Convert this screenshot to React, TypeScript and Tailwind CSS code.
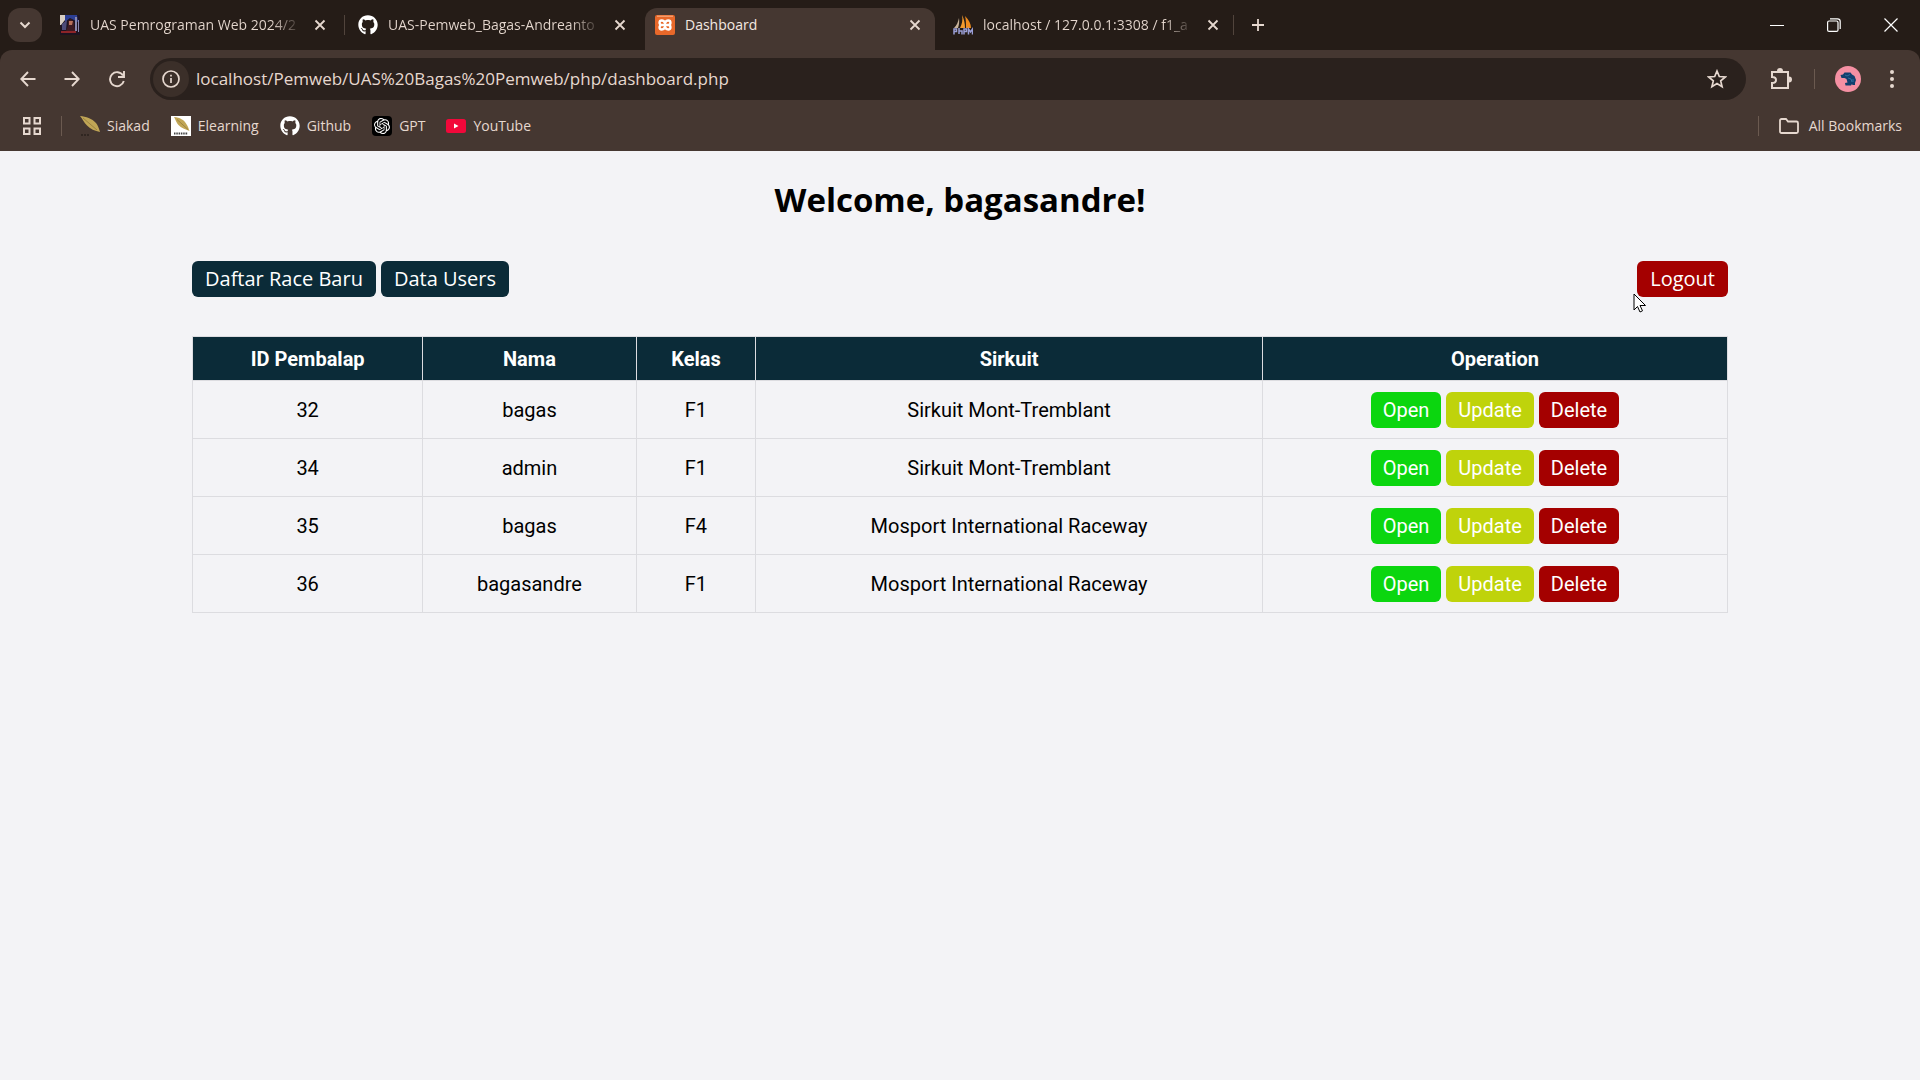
import React from "react";
import { FaGithub } from "react-icons/fa";
import { SiOpenai } from "react-icons/si";

const icon = "shrink-0 fill-none stroke-current";

function Close() {
  return (
    <button aria-label="Close tab" className="flex size-5 shrink-0 items-center justify-center text-[#e6d8cf]">
      <svg viewBox="0 0 12 12" className={`${icon} size-3`} strokeWidth="1.8"><path d="M1.5 1.5l9 9M10.5 1.5l-9 9" /></svg>
    </button>
  );
}

function CourseIcon() {
  return (
    <svg viewBox="0 0 20 20" className="size-5 shrink-0">
      <rect width="20" height="20" fill="#1d1320" />
      <path d="M0 0h6l-1 5-4 5H0z" fill="#d9cfc4" />
      <path d="M5 0h12l1 7-4-2-4-2-5 4z" fill="#2c3e94" />
      <path d="M2 9l5-4-1 10H2z" fill="#4c4a78" />
      <path d="M8 6l3-2 3 3v4l2 5H6l2-5z" fill="#3d1a22" />
      <path d="M9 6h4l-1 4H9z" fill="#b9705a" />
      <path d="M1 16h15v2H1z" fill="#8c2428" />
      <path d="M15 2h2v14h-2zM18 5h1v12h-1z" fill="#8a87ad" />
    </svg>
  );
}

function XamppIcon() {
  return (
    <svg viewBox="0 0 20 20" className="size-5 shrink-0">
      <rect width="20" height="20" rx="2" fill="#e8682a" />
      <path d="M2 1.200h16" stroke="#f6b48c" strokeWidth="1" />
      <path d="M9.800 10H6.800C3.800 10 3.800 5.500 6.800 5.500S9.500 8 10 8s.2-2.500 3.200-2.500S16.200 10 13.200 10h-3zM9.800 10H6.800c-3 0-3 4.500 0 4.500S9.500 12 10 12s.2 2.500 3.200 2.500 3-4.500 0-4.500" fill="none" stroke="#fff" strokeWidth="2.400" strokeLinejoin="round" />
    </svg>
  );
}

function SailIcon() {
  return (
    <svg viewBox="0 0 20 20" className="size-5 shrink-0">
      <path d="M6 3c.5 4 0 7-1 10H1C4 10 5 7 6 3z" fill="#c9b49b" />
      <path d="M9 0c1 5 0 9-2 13h5c0-5-1-9-3-13z" fill="#f29a2e" />
      <path d="M12 1c4 4 6 8 6 12h-5c0-5 0-8-1-12z" fill="#f08c1e" />
      <path d="M1 19.500V14h2.500v2.500H1M6 13v6M6 16h3v3.500M11 19.500V14h2.500v2.500H11M15.500 19.500V14l2 3 2-3v5.500" fill="none" stroke="#9a9ed6" strokeWidth="1.500" />
    </svg>
  );
}

function Feather() {
  return (
    <svg viewBox="0 0 20 20" className="size-5 shrink-0">
      <path d="M0 0c6 .5 12 2.500 16 7 2 2.500 3 5.500 4 9-5-1-10-3-13-6.500C4 6.500 2.500 3 0 0z" fill="#c1a656" />
      <path d="M3 2l14 12" stroke="#8d7535" strokeWidth=".7" />
      <path d="M1 19h9" stroke="#2a221c" strokeWidth="1.500" strokeDasharray="2 1" />
    </svg>
  );
}

function FeatherCard() {
  return (
    <svg viewBox="0 0 20 20" className="size-5 shrink-0">
      <path d="M0 0h20v20H0z" fill="#fff" />
      <path d="M3 1c6 .5 10 3 12 6.500 2 2.500 2.500 5 3.500 7.500-4-1.500-8.500-3-11-6S5 4.500 3 1z" fill="#c1a656" />
      <path d="M6 3.500l11 10" stroke="#8d7535" strokeWidth=".7" />
      <path d="M3 17.500h14" stroke="#444" strokeWidth="2.200" strokeDasharray="1.500 .8" />
    </svg>
  );
}

function YouTubeIcon() {
  return (
    <svg viewBox="0 0 20 14" className="h-[14px] w-5 shrink-0">
      <rect width="20" height="14" rx="2.500" fill="#f2083a" />
      <path d="M8 4.500l4.500 2.500L8 9.500z" fill="#fff" />
    </svg>
  );
}

function Avatar() {
  return (
    <svg viewBox="0 0 26 26" className="size-[26px]">
      <circle cx="13" cy="13" r="13" fill="#f590a3" />
      <path d="M5.500 9L8 8.500 9.500 6.500h6L17 8.500l2.500 1.500 1.500 4-1 3v2h-2.500l-.5-1-1 1.500h-5.500l-.5-2.500 2.500-.5-1-3.500-2-1H6.500z" fill="#12406e" />
      <path d="M10 9l2 1 3-1.500M13 12l3 1 1 3M18 13v3" fill="none" stroke="#2f6c9d" />
    </svg>
  );
}

function Tab({ label, icon: tabIcon, width }: { label: string; icon: React.ReactNode; width: string }) {
  return (
    <div className={`${width} flex shrink-0 items-center pr-[6px]`}>
      {tabIcon}
      <span className="ml-[10px] flex-1 whitespace-nowrap">
        <span className="bg-linear-to-r from-[#e6d8cf] from-88% to-[#e6d8cf]/20 bg-clip-text text-transparent">{label}</span>
      </span>
      <Close />
    </div>
  );
}

const links = [
  { label: "Siakad", icon: <Feather /> },
  { label: "Elearning", icon: <FeatherCard /> },
  { label: "Github", icon: <FaGithub className="size-5 text-white" /> },
  { label: "GPT", icon: <span className="flex size-5 items-center justify-center rounded bg-black"><SiOpenai className="size-4 text-white" /></span> },
  { label: "YouTube", icon: <YouTubeIcon /> },
];

const rows = [
  ["32", "bagas", "F1", "Sirkuit Mont-Tremblant"],
  ["34", "admin", "F1", "Sirkuit Mont-Tremblant"],
  ["35", "bagas", "F4", "Mosport International Raceway"],
  ["36", "bagasandre", "F1", "Mosport International Raceway"],
];

const btn = "h-9 rounded-md text-xl leading-9 text-white";
const cell = "border border-[#dcdce0]";

export default function App() {
  return (
    <div className="min-h-screen bg-[#f3f3f6] font-['Roboto',sans-serif] text-black">
      <header className="bg-[#251c17] font-['Open_Sans',sans-serif] text-sm text-[#e6d8cf]">
        <div className="flex h-[50px] items-stretch">
          <button aria-label="Search tabs" className="my-2 ml-2 mr-[18px] flex w-[34px] shrink-0 items-center justify-center rounded-xl bg-[#453731]">
            <svg viewBox="0 0 12 12" className={`${icon} size-3`} strokeWidth="2"><path d="M1.500 3.500L6 8l4.500-4.500" /></svg>
          </button>
          <Tab width="w-[276px]" label="UAS Pemrograman Web 2024/2" icon={<CourseIcon />} />
          <span className="my-auto ml-2 mr-[13px] h-5 w-px bg-[#51443c]" />
          <Tab width="w-[278px]" label="UAS-Pemweb_Bagas-Andreanto" icon={<FaGithub className="size-5 shrink-0 text-white" />} />
          <div className="mt-2 ml-[9px] flex w-[290px] shrink-0 items-center rounded-t-xl bg-[#453731] px-[10px] pb-2">
            <XamppIcon />
            <span className="ml-[10px] flex-1 text-[#f4e9e2]">Dashboard</span>
            <Close />
          </div>
          <Tab width="ml-[18px] w-[276px]" label="localhost / 127.0.0.1:3308 / f1_a" icon={<SailIcon />} />
          <span className="my-auto ml-1 mr-[17px] h-5 w-px bg-[#51443c]" />
          <button aria-label="New tab">
            <svg viewBox="0 0 14 14" className={`${icon} size-[14px]`} strokeWidth="1.800"><path d="M7 1v12M1 7h12" /></svg>
          </button>
          <div className="ml-auto flex items-center gap-[43px] pr-[22px] text-white">
            <button aria-label="Minimize"><svg viewBox="0 0 14 14" className={`${icon} size-[14px]`}><path d="M0 7.500h14" /></svg></button>
            <button aria-label="Restore"><svg viewBox="0 0 14 14" className={`${icon} size-[14px]`} strokeWidth="1.200"><rect x=".6" y="3" width="10.400" height="10.400" rx="1.500" /><path d="M3 .8h7.500a2.700 2.700 0 012.700 2.700V11" /></svg></button>
            <button aria-label="Close window"><svg viewBox="0 0 14 14" className={`${icon} size-[14px]`} strokeWidth="1.200"><path d="M.5.5l13 13M13.500.5l-13 13" /></svg></button>
          </div>
        </div>
        <div className="rounded-t-xl bg-[#453731]">
          <div className="flex items-center pt-2">
            <button aria-label="Back" className="ml-5 shrink-0"><svg viewBox="0 0 16 16" className={`${icon} size-4`} strokeWidth="1.900"><path d="M15.500 8H1.500M8 1L1.300 8 8 15" /></svg></button>
            <button aria-label="Forward" className="ml-[28px] shrink-0"><svg viewBox="0 0 16 16" className={`${icon} size-4`} strokeWidth="1.900"><path d="M.5 8h14M8 1l6.700 7L8 15" /></svg></button>
            <button aria-label="Reload" className="ml-[28px] shrink-0"><svg viewBox="0 0 18 18" className={`${icon} size-[18px]`} strokeWidth="1.900"><path d="M15 5.500A7 7 0 1015.800 11M16 1v6h-6" /></svg></button>
            <div className="ml-6 flex h-[42px] flex-1 items-center rounded-full bg-[#2a211d] px-[3px]">
              <button aria-label="Site information" className="flex size-9 items-center justify-center rounded-full bg-[#3b2f29]">
                <svg viewBox="0 0 18 18" className={`${icon} size-[18px]`} strokeWidth="1.700"><circle cx="9" cy="9" r="8" /><path d="M9 8v5M9 4.800v1.800" /></svg>
              </button>
              <input aria-label="Address" className="ml-[7px] min-w-0 flex-1 bg-transparent text-[17px] outline-none" defaultValue="localhost/Pemweb/UAS%20Bagas%20Pemweb/php/dashboard.php" />
              <button aria-label="Bookmark this page" className="mr-4"><svg viewBox="0 0 20 20" className={`${icon} size-5`} strokeWidth="1.700"><path d="M10 2l2.300 5.500 6 .5-4.600 3.900 1.400 5.800L10 14.600l-5.100 3.100 1.400-5.800L1.700 8l6-.5z" /></svg></button>
            </div>
            <button aria-label="Extensions" className="ml-6 shrink-0"><svg viewBox="0 0 22 22" className={`${icon} size-[22px]`} strokeWidth="2"><path d="M2 4h16v16H2v-5c3 0 4-1.500 4-3s-1-3-4-3z" /><path d="M8 3a2 2 0 014 0M19 9.500a2 2 0 010 4" className="fill-current" /></svg></button>
            <span className="ml-[22px] h-5 w-px bg-[#6b5a50]" />
            <button aria-label="Profile" className="ml-5 shrink-0"><Avatar /></button>
            <button aria-label="Menu" className="mr-[25px] ml-7 shrink-0"><svg viewBox="0 0 6 18" className="h-[18px] w-[6px] fill-current"><circle cx="3" cy="2" r="2" /><circle cx="3" cy="9" r="2" /><circle cx="3" cy="16" r="2" /></svg></button>
          </div>
          <nav className="flex h-[51px] items-center">
            <button aria-label="Apps" className="ml-[23px]"><svg viewBox="0 0 18 18" className={`${icon} size-[18px]`} strokeWidth="2"><path d="M1 1h5.500v5.500H1zM11.500 1H17v5.500h-5.500zM1 11.500h5.500V17H1zM11.500 11.500H17V17h-5.500z" /></svg></button>
            <span className="ml-5 mr-[18px] h-5 w-px bg-[#6b5a50]" />
            <div className="flex items-center gap-[21px]">
              {links.map((l) => (
                <a key={l.label} href="#" className="flex items-center gap-[7px]">{l.icon}{l.label}</a>
              ))}
            </div>
            <span className="ml-auto h-5 w-px bg-[#6b5a50]" />
            <button className="mr-[18px] ml-5 flex items-center gap-[10px]">
              <svg viewBox="0 0 20 16" className={`${icon} h-4 w-5`} strokeWidth="1.800"><path d="M1 13.500v-11A1.500 1.500 0 012.500 1H7l2 2.500h8.500A1.500 1.500 0 0119 5v8.500a1.500 1.500 0 01-1.500 1.500h-15A1.500 1.500 0 011 13.500z" /></svg>
              All Bookmarks
            </button>
          </nav>
        </div>
      </header>
      <main className="mx-auto w-4/5 pt-7">
        <h1 className="text-center font-['Open_Sans',sans-serif] text-[33px] leading-[42px] font-bold">Welcome, bagasandre!</h1>
        <div className="mt-10 flex gap-[5px] font-['Open_Sans',sans-serif]">
          <button className={`${btn} bg-[#0b2b38] px-[13px]`}>Daftar Race Baru</button>
          <button className={`${btn} bg-[#0b2b38] px-[13px]`}>Data Users</button>
          <div className="relative ml-auto">
            <button className={`${btn} bg-[#a40000] px-[13px]`}>Logout</button>
            <svg viewBox="0 0 14 20" className="pointer-events-none absolute top-8 -left-1 h-5 w-[14px]"><path d="M1 1v16l3.500-3.500L7 19l2.500-1.200L7 12.500h5.500z" fill="#fff" stroke="#000" strokeWidth="1" /></svg>
          </div>
        </div>
        <table className="mt-[39px] w-full table-fixed border-collapse text-center text-xl">
          <colgroup><col className="w-[15%]" /><col className="w-[13.9%]" /><col className="w-[7.8%]" /><col className="w-[33%]" /><col className="w-[30.3%]" /></colgroup>
          <thead>
            <tr className="h-11 bg-[#0b2b38] text-white">
              {["ID Pembalap", "Nama", "Kelas", "Sirkuit", "Operation"].map((h) => <th key={h} className={`${cell} font-bold`}>{h}</th>)}
            </tr>
          </thead>
          <tbody>
            {rows.map((r) => (
              <tr key={r[0]} className="h-[58px]">
                {r.map((c, i) => <td key={i} className={cell}>{c}</td>)}
                <td className={cell}>
                  <div className="flex justify-center gap-[5px]">
                    <button className={`${btn} bg-[#0bd60f] px-3`}>Open</button>
                    <button className={`${btn} bg-[#bfd30b] px-3`}>Update</button>
                    <button className={`${btn} bg-[#a40000] px-3`}>Delete</button>
                  </div>
                </td>
              </tr>
            ))}
          </tbody>
        </table>
      </main>
    </div>
  );
}
